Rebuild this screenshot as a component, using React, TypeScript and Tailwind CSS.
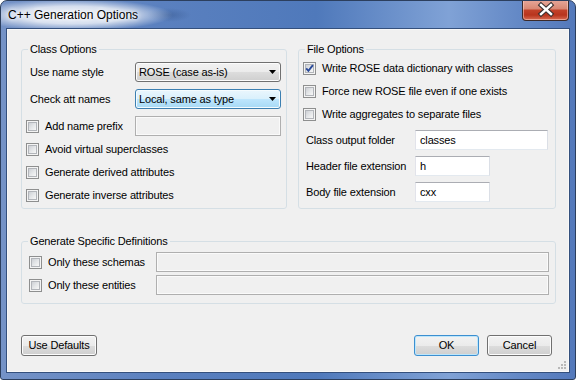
import React from "react";

function Checkbox({ checked }: { checked?: boolean }) {
  return (
    <div className="relative w-[13px] h-[13px] shrink-0 border border-[#8e8f8f] bg-[#f4f4f4] p-[1px]">
      <div className="w-full h-full border border-[#b2b5ba] bg-[linear-gradient(135deg,#cdd0d5_0%,#e4e6e8_50%,#f7f7f7_100%)]" />
      {checked && (
        <svg className="absolute inset-0" width="11" height="11" viewBox="0 0 11 11">
          <path d="M2.2 5.4 L4.4 7.8 L8.9 2.2" stroke="#2a4a9a" strokeWidth="1.9" fill="none" />
        </svg>
      )}
    </div>
  );
}

function Arrow() {
  return (
    <svg className="ml-auto mr-[4px] shrink-0" width="7" height="4" viewBox="0 0 7 4">
      <path d="M0 0H7L3.5 4Z" fill="#000" />
    </svg>
  );
}

function CheckRow({ label, checked, className = "" }: { label: string; checked?: boolean; className?: string }) {
  return (
    <div className={"flex items-center h-[13px] " + className}>
      <Checkbox checked={checked} />
      <span className="ml-[6px] leading-[13px] whitespace-nowrap">{label}</span>
    </div>
  );
}

function TextBox({ value, className = "" }: { value?: string; className?: string }) {
  return (
    <div
      className={
        "h-[20px] bg-white border border-[#abadb3] border-l-[#e2e3ea] border-r-[#dbdfe6] border-b-[#e3e9ef] flex items-center pl-[4px] " +
        className
      }
    >
      {value}
    </div>
  );
}

function DisabledBox({ className = "" }: { className?: string }) {
  return (
    <div
      className={
        "h-[20px] bg-[#f0f0f0] border border-[#afafaf] shadow-[inset_0_0_0_1px_#fafafa] " + className
      }
    />
  );
}

export default function App() {
  return (
    <div className="w-[576px] h-[380px] bg-white">
      <div className="w-[576px] h-[380px] flex flex-col border border-[#2c3f5e] rounded-t-[7px] rounded-b-[3px] overflow-hidden bg-[linear-gradient(to_right,#7593c7_0%,#5a80bf_28%,#4f79bb_55%,#80a2d6_78%,#6489c6_90%,#5479bb_100%)] font-['Liberation_Sans',Arial,sans-serif] text-[11px] tracking-[-0.15px] text-black">
        {/* title bar */}
        <div className="h-[27px] shrink-0 flex pl-[7px] pr-[6px] bg-[radial-gradient(ellipse_100px_16px_at_72px_14px,rgba(255,255,255,0.92)_0%,rgba(255,255,255,0.72)_55%,rgba(255,255,255,0)_100%),radial-gradient(ellipse_22px_7px_at_168px_14px,rgba(40,70,120,0.35),rgba(40,70,120,0))]">
          <div className="pt-[6px] text-[12px] tracking-normal leading-[16px] font-['Segoe_UI','Liberation_Sans',sans-serif] [text-shadow:0_0_8px_#fff,0_0_4px_#fff]">
            C++ Generation Options
          </div>
          <div className="ml-auto -mt-[1px] w-[47px] h-[21px] rounded-b-[4px] border border-[#3b2a2a] border-t-0 bg-[linear-gradient(#e7a89a_0%,#d88773_45%,#c2422a_50%,#b8341d_75%,#d86b52_100%)] shadow-[inset_0_0_0_1px_rgba(255,220,210,0.5)]">
            <svg width="45" height="20" viewBox="0 0 45 20">
              <path d="M18 5 L28 14 M28 5 L18 14" stroke="#3b3030" strokeWidth="4.6" strokeLinecap="square" fill="none" />
              <path d="M18 5 L28 14 M28 5 L18 14" stroke="#ffffff" strokeWidth="2.4" strokeLinecap="square" fill="none" />
            </svg>
          </div>
        </div>

        {/* client */}
        <div className="mx-[5px] mb-[6px] flex-1 border border-[#34507d] bg-[#f0f0f0] shadow-[inset_0_0_0_1px_#f8f8f8] relative flex flex-col pl-[14px] pr-[13px] pt-[13px]">
          <div className="flex gap-[11px]">
            {/* Class Options */}
            <fieldset className="w-[266px] h-[167px] border border-[#d5dfe5] rounded-[3px]">
              <legend className="ml-[6px] px-[2px] leading-[14px]">Class Options</legend>
              <div className="pt-[6px] flex flex-col">
                <div className="flex items-center h-[20px] pl-[8px]">
                  <span className="w-[105px] shrink-0">Use name style</span>
                  <div className="w-[146px] h-[20px] rounded-[3px] border border-[#707070] bg-[linear-gradient(#f2f2f2_0%,#ebebeb_50%,#dddddd_50%,#cfcfcf_100%)] shadow-[inset_0_0_0_1px_#fcfcfc] flex items-center pl-[3px]">
                    <span>ROSE (case as-is)</span>
                    <Arrow />
                  </div>
                </div>
                <div className="flex items-center h-[20px] mt-[7px] pl-[8px]">
                  <span className="w-[105px] shrink-0">Check att names</span>
                  <div className="w-[146px] h-[20px] rounded-[3px] border border-[#3c7fb1] bg-[linear-gradient(#eaf6fd_0%,#d9f0fc_50%,#bee6fd_50%,#a7d9f5_100%)] shadow-[inset_0_0_0_1px_#f4fbfe] flex items-center pl-[3px]">
                    <span>Local, same as type</span>
                    <Arrow />
                  </div>
                </div>
                <div className="flex items-center h-[20px] mt-[7px] pl-[4px]">
                  <div className="w-[109px] shrink-0 flex items-center">
                    <Checkbox />
                    <span className="ml-[6px] whitespace-nowrap">Add name prefix</span>
                  </div>
                  <DisabledBox className="w-[146px]" />
                </div>
                <div className="pl-[4px] flex flex-col">
                  <CheckRow label="Avoid virtual superclasses" className="mt-[7px]" />
                  <CheckRow label="Generate derived attributes" className="mt-[10px]" />
                  <CheckRow label="Generate inverse attributes" className="mt-[10px]" />
                </div>
              </div>
            </fieldset>

            {/* File Options */}
            <fieldset className="w-[258px] h-[167px] border border-[#d5dfe5] rounded-[3px]">
              <legend className="ml-[6px] px-[2px] leading-[14px]">File Options</legend>
              <div className="pt-[6px] flex flex-col">
                <div className="pl-[4px] flex flex-col">
                  <CheckRow label="Write ROSE data dictionary with classes" checked />
                  <CheckRow label="Force new ROSE file even if one exists" className="mt-[10px]" />
                  <CheckRow label="Write aggregates to separate files" className="mt-[10px]" />
                </div>
                <div className="flex items-center h-[20px] mt-[9px] pl-[7px]">
                  <span className="w-[109px] shrink-0">Class output folder</span>
                  <TextBox value="classes" className="w-[133px]" />
                </div>
                <div className="flex items-center h-[20px] mt-[6px] pl-[7px]">
                  <span className="w-[109px] shrink-0">Header file extension</span>
                  <TextBox value="h" className="w-[75px]" />
                </div>
                <div className="flex items-center h-[20px] mt-[6px] pl-[7px]">
                  <span className="w-[109px] shrink-0">Body file extension</span>
                  <TextBox value="cxx" className="w-[75px]" />
                </div>
              </div>
            </fieldset>
          </div>

          {/* Generate Specific Definitions */}
          <fieldset className="mt-[25px] w-[535px] h-[70px] border border-[#d5dfe5] rounded-[3px]">
            <legend className="ml-[6px] px-[2px] leading-[14px]">Generate Specific Definitions</legend>
            <div className="pt-[4px] flex flex-col pl-[7px] pr-[6px]">
              <div className="flex items-center h-[20px]">
                <div className="w-[127px] shrink-0 flex items-center">
                  <Checkbox />
                  <span className="ml-[6px] whitespace-nowrap">Only these schemas</span>
                </div>
                <DisabledBox className="flex-1" />
              </div>
              <div className="flex items-center h-[20px] mt-[3px]">
                <div className="w-[127px] shrink-0 flex items-center">
                  <Checkbox />
                  <span className="ml-[6px] whitespace-nowrap">Only these entities</span>
                </div>
                <DisabledBox className="flex-1" />
              </div>
            </div>
          </fieldset>

          {/* buttons */}
          <div className="mt-[31px] flex items-center pr-[4px]">
            <button className="w-[76px] h-[21px] rounded-[3px] border border-[#707070] bg-[linear-gradient(#f2f2f2_0%,#ebebeb_50%,#dddddd_50%,#cfcfcf_100%)] shadow-[inset_0_0_0_1px_#fcfcfc] leading-[19px]">
              Use Defaults
            </button>
            <button className="ml-auto w-[65px] h-[21px] rounded-[3px] border border-[#3c8fd0] bg-[linear-gradient(#f2f2f2_0%,#ebebeb_50%,#dddddd_50%,#cfcfcf_100%)] shadow-[inset_0_0_0_1px_#bde6fb] leading-[19px]">
              OK
            </button>
            <button className="ml-[8px] w-[65px] h-[21px] rounded-[3px] border border-[#707070] bg-[linear-gradient(#f2f2f2_0%,#ebebeb_50%,#dddddd_50%,#cfcfcf_100%)] shadow-[inset_0_0_0_1px_#fcfcfc] leading-[19px]">
              Cancel
            </button>
          </div>

          {/* size grip */}
          <svg className="absolute right-[2px] bottom-[2px]" width="10" height="10" viewBox="0 0 10 10">
            <g fill="#b8b8b8">
              <rect x="7" y="1" width="2" height="2" />
              <rect x="4" y="4" width="2" height="2" />
              <rect x="7" y="4" width="2" height="2" />
              <rect x="1" y="7" width="2" height="2" />
              <rect x="4" y="7" width="2" height="2" />
              <rect x="7" y="7" width="2" height="2" />
            </g>
          </svg>
        </div>
      </div>
    </div>
  );
}
